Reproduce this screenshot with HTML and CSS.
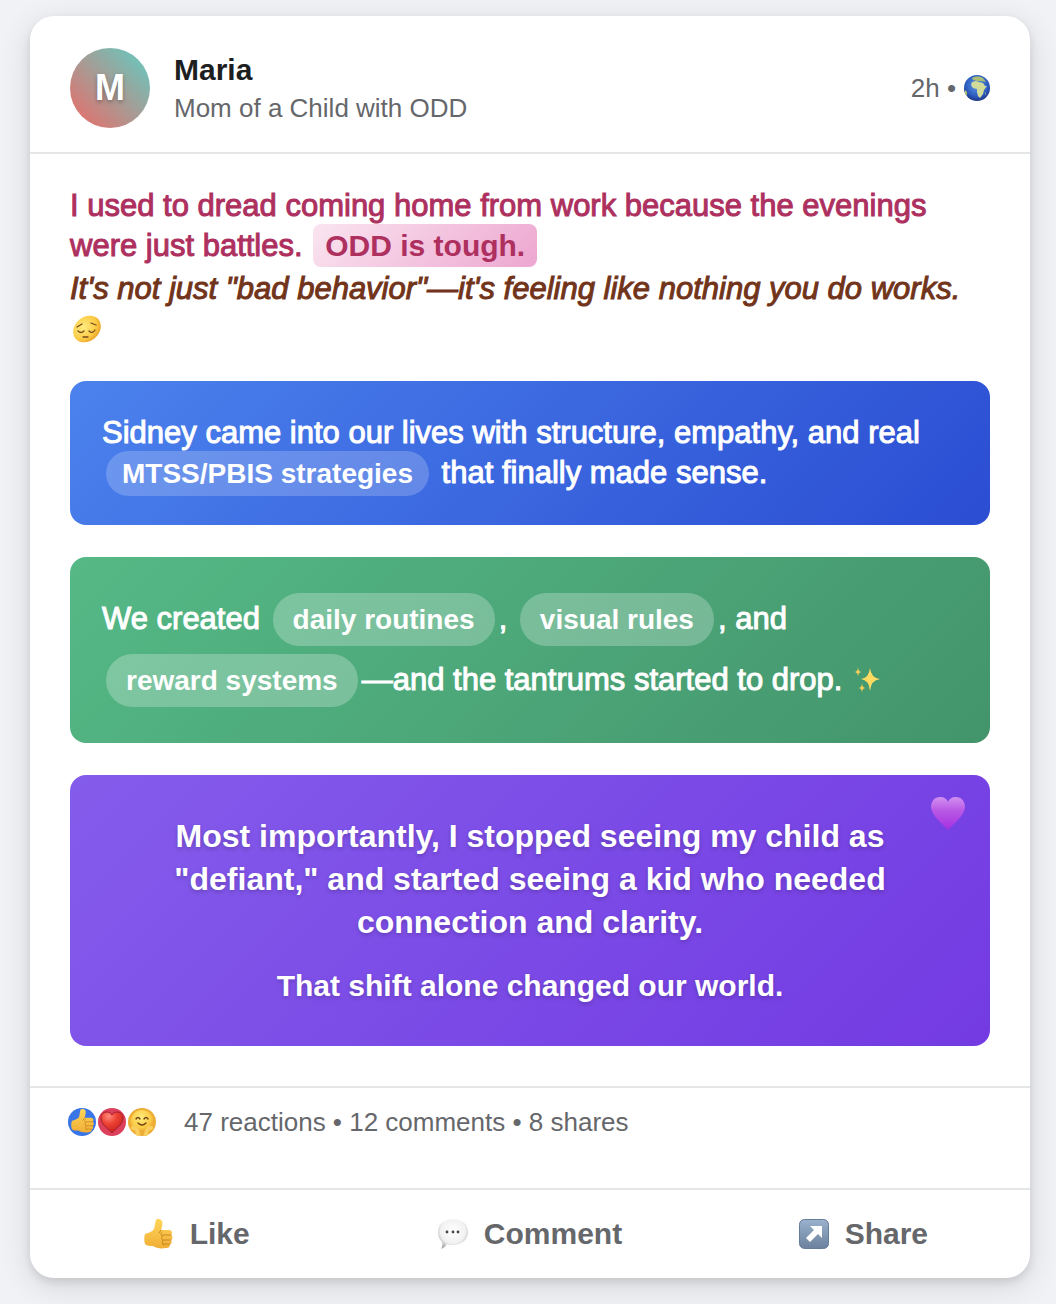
FILE: index.html
```html
<!DOCTYPE html>
<html lang="en">
<head>
<meta charset="utf-8">
<meta name="viewport" content="width=device-width, initial-scale=1">
<title>Maria – Mom of a Child with ODD</title>
<link rel="stylesheet" href="styles.css">
</head>
<body>
<svg class="defs" aria-hidden="true">
  <defs>
    <linearGradient id="skin" x1="0" y1="0" x2="0" y2="1"><stop offset="0" stop-color="#ffd65a"/><stop offset="1" stop-color="#f0ae35"/></linearGradient>
    <radialGradient id="face" cx=".45" cy=".35" r=".7"><stop offset="0" stop-color="#ffec80"/><stop offset=".65" stop-color="#fbcb45"/><stop offset="1" stop-color="#e69a25"/></radialGradient>
    <radialGradient id="sea" cx=".5" cy=".4" r=".6"><stop offset="0" stop-color="#5c9be6"/><stop offset=".7" stop-color="#2d5cc0"/><stop offset="1" stop-color="#1b3584"/></radialGradient>
    <radialGradient id="red" cx=".35" cy=".2" r=".7"><stop offset="0" stop-color="#ff8a7c"/><stop offset=".5" stop-color="#ee4436"/><stop offset="1" stop-color="#d02822"/></radialGradient>
    <linearGradient id="violet" x1="0" y1="0" x2="0" y2="1"><stop offset="0" stop-color="#e9a4f4"/><stop offset=".4" stop-color="#cb60e6"/><stop offset="1" stop-color="#b02ce0"/></linearGradient>
    <radialGradient id="bubble" cx=".5" cy=".4" r=".6"><stop offset="0" stop-color="#fff"/><stop offset=".7" stop-color="#f1f1f1"/><stop offset="1" stop-color="#adadad"/></radialGradient>
    <linearGradient id="steel" x1="0" y1="0" x2="0" y2="1"><stop offset="0" stop-color="#9ab2cd"/><stop offset="1" stop-color="#6b819d"/></linearGradient>
    <symbol id="thumb" viewBox="0 0 30 30">
      <path d="M1 15c3-1 7-2 9-5 1-3 1-7 2-9 1-2 5-1 6 1 1 3 0 6-1 9h8c3 0 4 3 2 5 2 1 2 4 0 5 1 2 1 4-1 4 0 3-1 4-4 4-5 1-10 0-13-2-3 0-6 0-8-2-1-3-1-7 0-10z" fill="url(#skin)"/>
      <path d="M17 11l-2 3M27 16h-8M27 21h-8M26 25h-7M18 13c-2 2-1 4 1 4-2 1-2 3 0 4-1 2-1 4 1 5" fill="none" stroke="#c98522" stroke-width="1" stroke-linecap="round"/>
    </symbol>
    <symbol id="heart" viewBox="0 0 34 34"><path d="M17 33C12 27 1 20 0 10 0 4 4 0 9 0c4 0 7 2 8 5 1-3 4-5 8-5 5 0 9 4 9 10-1 10-12 17-17 23z"/></symbol>
  </defs>
</svg>

<article class="card">
  <header class="header">
    <div class="avatar" aria-hidden="true">M</div>
    <div class="author">
      <h1 class="name">Maria</h1>
      <p class="role">Mom of a Child with ODD</p>
    </div>
    <div class="time">2h •
      <svg class="globe" viewBox="0 0 26 26" role="img" aria-label="Public">
        <circle cx="13" cy="13" r="13" fill="url(#sea)"/>
        <path d="M8 3c3-2 8-2 11 0l3 4-5-1-4 0-4-1z" fill="#a9bd74"/>
        <path d="M8 7l4-1 3 1 4 1 2 3h2l-3 4-1 4-3 4-2-2-1-4 0-3-4-1-2-3z" fill="#d3db9a"/>
        <path d="M1 15l2 2 0 4-2-3zM21 18l1-1-1 4z" fill="#b5c56b"/>
      </svg>
    </div>
  </header>

  <div class="content">
    <div class="intro">
      <p class="dread medium">I used to dread coming home from work because the evenings<br>were just battles. <strong class="highlight">ODD is tough.</strong></p>
      <p class="behavior medium">It's not just "bad behavior"—it's feeling like nothing you do works.
        <svg class="pensive" viewBox="0 0 28 28" role="img" aria-label="Pensive face">
          <ellipse cx="14" cy="14" rx="15" ry="12" transform="rotate(-40 14 14)" fill="url(#face)"/>
          <path d="M4 12l5-3M18 8l5 2M5 16c2 2 4 2 6 0M16 16c2 2 4 2 6-1M10 22h5" fill="none" stroke="#78491a" stroke-width="1.3" stroke-linecap="round"/>
        </svg>
      </p>
    </div>

    <section class="panel support">
      <p class="medium">Sidney came into our lives with structure, empathy, and real<br><strong class="tag">MTSS/PBIS strategies</strong> that finally made sense.</p>
    </section>

    <section class="panel routines">
      <p class="medium">We created <strong class="pill">daily routines</strong>, <strong class="pill">visual rules</strong>, and<br><strong class="pill">reward systems</strong>—and the tantrums started to drop.
        <svg class="sparkles" viewBox="0 0 26 26" role="img" aria-label="Sparkles">
          <path d="M16 1q1 10 10 11-9 1-10 12-1-11-9-12 8-1 9-11z" fill="#ffdb62"/>
          <path d="M4 0q0 5 4 5-4 0-4 5 0-5-4-5 4 0 4-5zM8 16q0 5 4 5-4 0-4 5 0-5-4-5 4 0 4-5z" fill="#f5cf58"/>
        </svg>
      </p>
    </section>

    <section class="panel insight">
      <svg class="love" role="img" aria-label="Purple heart" fill="url(#violet)"><use href="#heart"/></svg>
      <p class="quote">Most importantly, I stopped seeing my child as<br>"defiant," and started seeing a kid who needed<br>connection and clarity.</p>
      <p class="shift">That shift alone changed our world.</p>
    </section>
  </div>

  <div class="stats">
    <div class="reactions" aria-hidden="true">
      <svg class="reaction" viewBox="0 0 28 28"><circle cx="14" cy="14" r="14" fill="#3975e6"/><use href="#thumb" x="3" y="1" width="24" height="24"/></svg>
      <svg class="reaction" viewBox="0 0 28 28"><circle cx="14" cy="14" r="14" fill="#dc405b"/><path d="M14 25C11 21 3 17 3 10c0-4 3-6 6-6 2 0 4 1 5 3 1-2 3-3 5-3 3 0 6 2 6 6 0 7-8 11-11 15z" fill="url(#red)" stroke="#a51e2c"/></svg>
      <svg class="reaction" viewBox="0 0 28 28"><circle cx="14" cy="14" r="14" fill="#edae38"/><circle cx="14" cy="13" r="11" fill="url(#face)"/><path d="M8 11q2-3 4 0M16 11q2-3 4 0M10 15q4 4 8 0" fill="none" stroke="#704516" stroke-width="1.4" stroke-linecap="round"/><path d="M5 20q4-1 5 6M23 20q-4-1-5 6" fill="none" stroke="#f9cd5e" stroke-width="4" stroke-linecap="round"/></svg>
    </div>
    <p class="counts">47 reactions • 12 comments • 8 shares</p>
  </div>

  <footer class="actions">
    <button class="action" type="button"><svg class="icon" aria-hidden="true"><use href="#thumb"/></svg>Like</button>
    <button class="action" type="button"><svg class="icon" viewBox="0 0 30 30" aria-hidden="true"><path d="M15 0c8 0 15 5 15 13s-7 13-15 13c-2 0-4 0-6-1-1 2-3 4-6 5 1-2 2-4 1-7-3-3-4-6-4-10C0 5 7 0 15 0z" fill="url(#bubble)"/><g fill="#444"><circle cx="9" cy="13" r="1.4"/><circle cx="15" cy="13" r="1.4"/><circle cx="20" cy="13" r="1.4"/></g></svg>Comment</button>
    <button class="action" type="button"><svg class="icon" viewBox="0 0 30 30" aria-hidden="true"><rect x=".5" y=".5" width="29" height="29" rx="5" fill="url(#steel)" stroke="#667c98"/><path d="M11 7h12v12l-4-4-8 8-4-4 8-8z" fill="#fff"/></svg>Share</button>
  </footer>
</article>
</body>
</html>
```

FILE: styles.css
```css
* {
  box-sizing: border-box;
}

body {
  margin: 0;
  padding: 16px 26px 26px 30px;
  background: #f0f2f5;
  color: #1c1e21;
  font-family: "Liberation Sans", Arial, sans-serif;
  font-size: 30px;
  line-height: 40px;
}

h1,
p {
  margin: 0;
}

.defs {
  position: absolute;
  width: 0;
  height: 0;
}

.card {
  background: #fff;
  border-radius: 24px;
  box-shadow: 0 4px 8px rgba(0, 0, 0, 0.1), 0 8px 32px rgba(0, 0, 0, 0.12);
}

.header {
  display: flex;
  align-items: center;
  gap: 24px;
  padding: 32px 40px 24px;
  border-bottom: 2px solid #e4e6e8;
}

.avatar {
  display: grid;
  place-items: center;
  width: 80px;
  height: 80px;
  border-radius: 50%;
  background: linear-gradient(45deg, #e0736f 10%, #74bfb6 85%);
  color: #fff;
  font-size: 36px;
  font-weight: 700;
  text-shadow: 0 2px 4px rgba(0, 0, 0, 0.3);
}

.author {
  flex: 1;
}

.name {
  font-size: 30px;
  line-height: 40px;
}

.role,
.time,
.counts {
  color: #65676b;
  font-size: 26px;
  line-height: 36px;
}

.time {
  display: flex;
  align-items: center;
  gap: 8px;
}

.globe {
  width: 26px;
  height: 26px;
}

.content {
  display: flex;
  flex-direction: column;
  gap: 32px;
  padding: 32px 40px 40px;
}

.medium {
  font-size: 31px;
  -webkit-text-stroke: 1px currentColor;
}

.medium strong {
  -webkit-text-stroke: 0;
}

.dread {
  color: #ad305f;
}

.highlight {
  margin-left: 2px;
  padding: 5px 12px;
  border-radius: 8px;
  background: linear-gradient(135deg, #fae5f0, #eda6d0);
  font-size: 30px;
}

.behavior {
  margin-top: 3px;
  color: #71341a;
  font-style: italic;
}

.pensive {
  width: 28px;
  height: 28px;
  margin-left: 3px;
  vertical-align: -4px;
}

.panel {
  padding: 32px;
  border-radius: 16px;
  color: #fff;
}

.support {
  background: linear-gradient(135deg, #4b82ed, #2b4dd2);
}

.tag {
  margin: 0 4px;
  padding: 7px 16px;
  border-radius: 24px;
  background: rgba(255, 255, 255, 0.2);
  font-size: 28px;
  line-height: 36px;
}

.routines {
  background: linear-gradient(135deg, #55b986, #43946b);
}

.pill {
  display: inline-block;
  margin: 4px;
  padding: 8px 20px;
  border-radius: 32px;
  background: rgba(255, 255, 255, 0.25);
  font-size: 28px;
  line-height: 37px;
}

.sparkles {
  width: 26px;
  height: 26px;
  margin-left: 3px;
  vertical-align: -3px;
}

.insight {
  position: relative;
  padding: 40px;
  background: linear-gradient(135deg, #845ceb, #733ae2);
  font-weight: 700;
  text-align: center;
  text-shadow: 0 2px 4px rgba(0, 0, 0, 0.2);
}

.love {
  position: absolute;
  top: 22px;
  right: 25px;
  width: 34px;
  height: 34px;
  opacity: 0.8;
}

.quote {
  font-size: 32px;
  line-height: 43px;
}

.shift {
  margin-top: 22px;
}

.stats {
  display: flex;
  align-items: flex-start;
  gap: 28px;
  padding: 16px 38px 48px;
  border-top: 2px solid #e4e6e8;
}

.reactions {
  display: flex;
  gap: 2px;
  padding-top: 4px;
}

.reaction {
  width: 28px;
  height: 28px;
}

.actions {
  display: flex;
  border-top: 2px solid #e4e6e8;
}

.action {
  display: flex;
  flex: 1;
  align-items: center;
  justify-content: center;
  gap: 16px;
  padding: 24px 0;
  border: 0;
  background: none;
  color: #65676b;
  font: 700 30px/40px "Liberation Sans", Arial, sans-serif;
}

.icon {
  width: 30px;
  height: 30px;
}
```
